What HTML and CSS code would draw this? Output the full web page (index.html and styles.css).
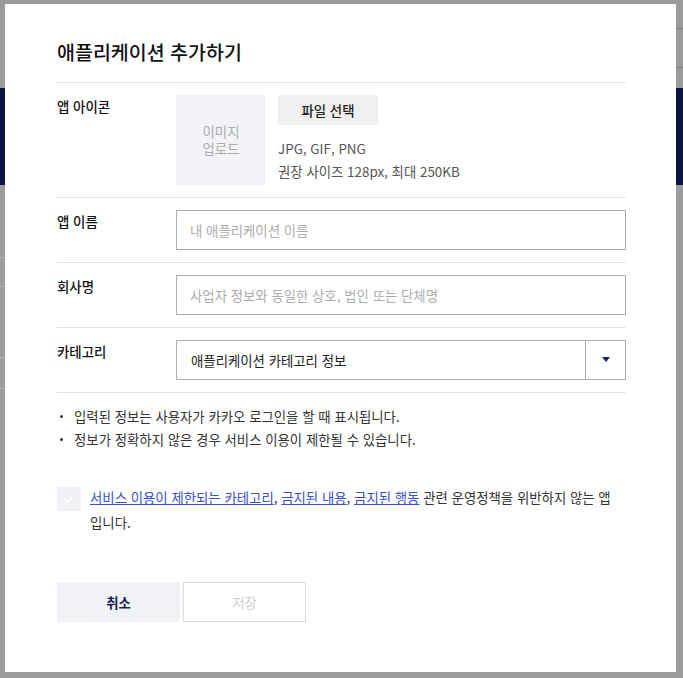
FILE: index.html
```html
<!DOCTYPE html>
<html lang="ko">
<head>
<meta charset="utf-8">
<title>애플리케이션 추가하기</title>
<link rel="stylesheet" href="styles.css">
</head>
<body>
<div class="bg">
  <div class="bg-top">
    <div class="bg-line bg-line-1"></div>
    <div class="bg-line bg-line-2"></div>
  </div>
  <div class="bg-band"></div>
  <div class="bg-list">
    <div class="bg-row bg-row-a"></div>
    <div class="bg-row bg-row-b"></div>
    <div class="bg-row bg-row-c"></div>
    <div class="bg-row bg-row-d"></div>
  </div>
</div>

<div class="modal">
  <h1 class="title">애플리케이션 추가하기</h1>

  <div class="row">
    <div class="label">앱 아이콘</div>
    <div class="field icon-field">
      <div class="icon-box">이미지<br>업로드</div>
      <div class="icon-info">
        <button class="file-btn" type="button">파일 선택</button>
        <p class="hint">JPG, GIF, PNG<br>권장 사이즈 128px, 최대 250KB</p>
      </div>
    </div>
  </div>

  <div class="row">
    <div class="label">앱 이름</div>
    <div class="field"><input class="input" type="text" placeholder="내 애플리케이션 이름"></div>
  </div>

  <div class="row">
    <div class="label">회사명</div>
    <div class="field"><input class="input" type="text" placeholder="사업자 정보와 동일한 상호, 법인 또는 단체명"></div>
  </div>

  <div class="row">
    <div class="label">카테고리</div>
    <div class="field">
      <div class="select">
        <span class="select-value">애플리케이션 카테고리 정보</span>
        <span class="select-btn">
          <svg width="8" height="6" viewBox="0 0 8 6"><path d="M0 0 H8 L4 5 Z" fill="#1a2266"/></svg>
        </span>
      </div>
    </div>
  </div>

  <ul class="notes">
    <li><span class="dot"></span>입력된 정보는 사용자가 카카오 로그인을 할 때 표시됩니다.</li>
    <li><span class="dot"></span>정보가 정확하지 않은 경우 서비스 이용이 제한될 수 있습니다.</li>
  </ul>

  <div class="agree">
    <span class="check">
      <svg width="12" height="10" viewBox="0 0 12 10"><path d="M1.5 5 L4.5 8 L10.5 1.5" fill="none" stroke="#ffffff" stroke-width="1.6"/></svg>
    </span>
    <p class="agree-text"><a href="#" class="link">서비스 이용이 제한되는 카테고리</a>, <a href="#" class="link">금지된 내용</a>, <a href="#" class="link">금지된 행동</a> 관련 운영정책을 위반하지 않는 앱 입니다.</p>
  </div>

  <div class="actions">
    <button class="btn btn-cancel" type="button">취소</button>
    <button class="btn btn-save" type="button">저장</button>
  </div>
</div>
</body>
</html>
```

FILE: styles.css
```css
html, body {
  margin: 0;
  padding: 0;
}

body {
  width: 683px;
  height: 678px;
  overflow: hidden;
  position: relative;
  background: #9a9b9a;
  font-family: "Noto Sans CJK KR", "Noto Sans", sans-serif;
}

/* dimmed page behind the dialog */
.bg-top {
  height: 88px;
  padding-top: 28px;
  box-sizing: border-box;
}

.bg-line {
  margin-left: 620px;
  border-top: 1px solid #7e7f7e;
}

.bg-line-2 {
  margin-top: 38px;
}

.bg-band {
  height: 97px;
  background: #0b1246;
}

.bg-list {
  width: 200px;
}

.bg-row {
  border-bottom: 1px solid #b2b3b2;
}

.bg-row-a { height: 72px; }
.bg-row-b { height: 28px; }
.bg-row-c { height: 70px; }
.bg-row-d { height: 30px; }

/* dialog */
.modal {
  position: absolute;
  left: 5px;
  top: 4px;
  width: 671px;
  height: 668px;
  box-sizing: border-box;
  padding: 35px 50px 0 52px;
  background: #ffffff;
  color: #222;
}

.title {
  margin: 0;
  padding-bottom: 17px;
  border-bottom: 1px solid #e4e4e4;
  font-size: 19.5px;
  line-height: 26px;
  font-weight: 500;
  color: #111;
}

.row {
  display: flex;
  padding: 12px 0;
  border-bottom: 1px solid #e4e4e4;
}

.label {
  width: 119px;
  flex: none;
  font-size: 13.4px;
  line-height: 22px;
  font-weight: 500;
  color: #111;
}

.field {
  flex: 1;
  display: flex;
}

.icon-box {
  width: 90px;
  height: 90px;
  flex: none;
  display: flex;
  align-items: center;
  justify-content: center;
  text-align: center;
  background: #f2f3f8;
  color: #acacac;
  font-size: 13.4px;
  line-height: 17px;
}

.icon-info {
  margin-left: 12px;
}

.file-btn {
  display: block;
  width: 100px;
  height: 30px;
  border: 0;
  padding: 0;
  background: #f0f0f0;
  color: #222;
  font-family: inherit;
  font-size: 13.4px;
  font-weight: 500;
}

.hint {
  margin: 12px 0 0;
  font-size: 13.4px;
  line-height: 23px;
  color: #555;
}

.input {
  flex: 1;
  height: 40px;
  box-sizing: border-box;
  margin: 0;
  padding: 0 13px;
  border: 1px solid #ababab;
  border-radius: 0;
  font-family: inherit;
  font-size: 13.4px;
  color: #222;
  outline: none;
}

.input::placeholder {
  color: #acacac;
}

.select {
  flex: 1;
  display: flex;
  height: 40px;
  box-sizing: border-box;
  border: 1px solid #ababab;
}

.select-value {
  flex: 1;
  padding-left: 14px;
  font-size: 13.4px;
  line-height: 38px;
  color: #222;
}

.select-btn {
  width: 39px;
  flex: none;
  display: flex;
  align-items: center;
  justify-content: center;
  border-left: 1px solid #ababab;
}

.notes {
  list-style: none;
  margin: 12px 0 0;
  padding: 0;
  font-size: 13.4px;
  line-height: 23px;
  color: #333;
}

.notes li {
  display: flex;
  align-items: center;
}

.dot {
  width: 3px;
  height: 3px;
  margin: 0 11px 0 3px;
  border-radius: 50%;
  background: #333;
  flex: none;
}

.agree {
  display: flex;
  align-items: flex-start;
  margin-top: 34px;
}

.check {
  width: 24px;
  height: 24px;
  flex: none;
  margin: 2px 9px 0 0;
  display: flex;
  align-items: center;
  justify-content: center;
  background: #f0f1f7;
}

.agree-text {
  margin: 0;
  font-size: 13.4px;
  line-height: 25px;
  color: #333;
  word-break: keep-all;
}

.link {
  color: #3552c8;
  text-decoration: underline;
}

.actions {
  display: flex;
  gap: 3px;
  margin-top: 47px;
}

.btn {
  width: 123px;
  height: 40px;
  box-sizing: border-box;
  margin: 0;
  padding: 0;
  font-family: inherit;
  font-size: 13.4px;
}

.btn-cancel {
  border: 0;
  background: #f0f2f8;
  color: #1b1f4d;
  font-weight: 700;
}

.btn-save {
  border: 1px solid #dcdcdc;
  background: #fff;
  color: #cfcfcf;
}
```
